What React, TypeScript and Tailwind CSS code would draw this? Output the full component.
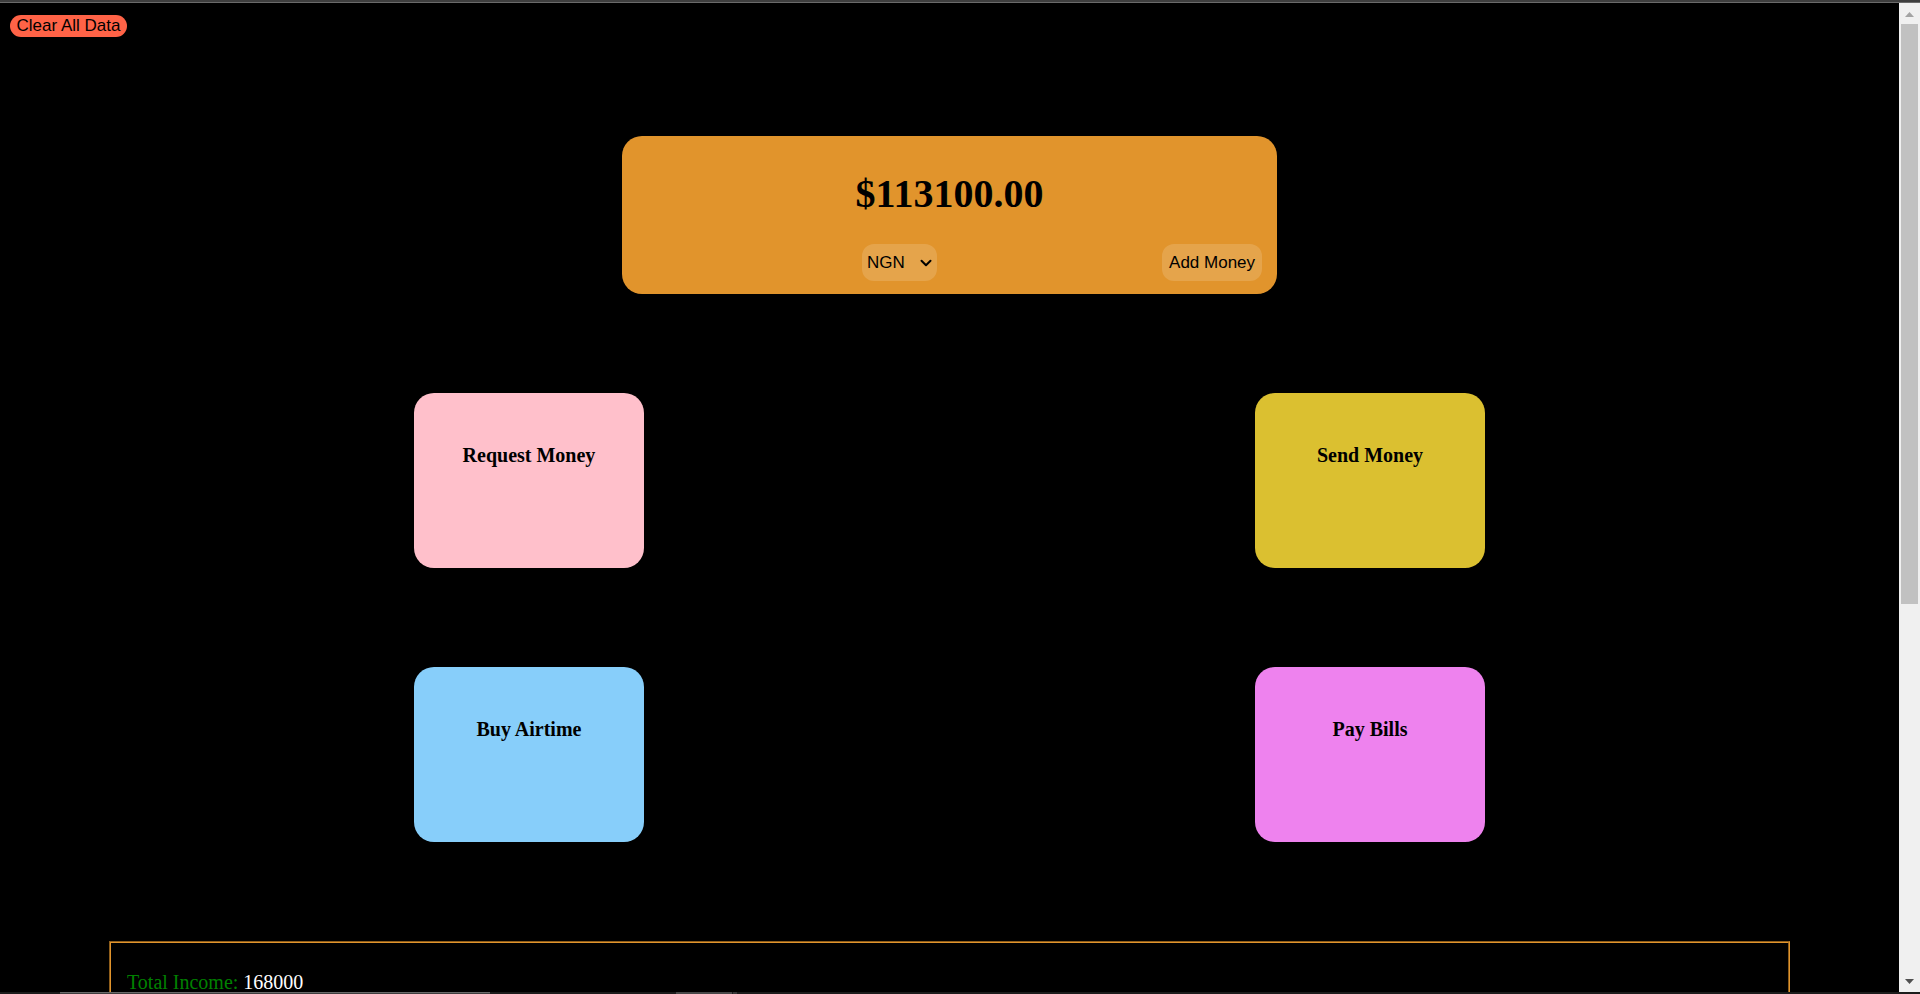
import { ChevronDown } from "lucide-react";

const actions = [
  { label: "Request Money", color: "bg-[#ffc0cb]" },
  { label: "Send Money", color: "bg-[#dbc030]" },
  { label: "Buy Airtime", color: "bg-[#87cefa]" },
  { label: "Pay Bills", color: "bg-[#ee82ee]" },
];

function Balance() {
  return (
    <section className="mx-auto mt-[99px] h-[158px] w-[34.5%] rounded-[20px] bg-[#e1942c] pt-[34px]">
      <h1 className="text-center text-[40px] leading-[48px] font-bold">$113100.00</h1>
      <div className="mt-[26px] flex justify-between pr-[15px] pl-60">
        <div className="relative">
          <select
            aria-label="Currency"
            className="block h-[37px] w-[75px] appearance-none rounded-[12px] bg-white/15 pl-[5px] font-['Liberation_Sans',sans-serif] text-[17px]"
          >
            <option>NGN</option>
            <option>USD</option>
          </select>
          <ChevronDown
            className="pointer-events-none absolute top-[10px] right-[2px] size-[18px]"
            strokeWidth={2.7}
          />
        </div>
        <button className="h-[37px] w-[100px] rounded-[12px] bg-white/15 font-['Liberation_Sans',sans-serif] text-[17px]">
          Add Money
        </button>
      </div>
    </section>
  );
}

function Scrollbar() {
  return (
    <div aria-hidden="true" className="flex w-[21px] shrink-0 flex-col items-center bg-[#f0f0f0]">
      <svg className="h-[21px] w-[9px] shrink-0" viewBox="0 0 9 21">
        <path d="M0 14 4.500 9 9 14Z" fill="#a3a3a3" />
      </svg>
      <div className="h-[580px] w-[17px] bg-[#c1c1c1]" />
      <svg className="mt-auto h-[21px] w-[9px] shrink-0" viewBox="0 0 9 21">
        <path d="M0 8 4.500 13 9 8Z" fill="#505050" />
      </svg>
    </div>
  );
}

export default function App() {
  return (
    <div className="flex h-screen flex-col overflow-hidden bg-black font-['Liberation_Serif',serif] text-black">
      <div className="h-[3px] shrink-0 border-b border-[#6a6a6a] bg-[#3e3e3e]" />
      <div className="flex min-h-0 flex-1">
        <main className="min-w-0 flex-1 overflow-hidden">
          <div className="flex px-[10px] pt-3">
            <button className="h-[22px] w-[117px] rounded-full bg-[#ff6347] font-['Liberation_Sans',sans-serif] text-[17px] leading-[20px]">
              Clear All Data
            </button>
          </div>
          <Balance />
          <div className="mt-[99px] ml-[21.8%] grid w-[56.4%] grid-cols-[230px_230px] justify-between gap-y-[99px]">
            {actions.map((action) => (
              <button
                key={action.label}
                className={`flex h-[175px] justify-center rounded-[20px] pt-[50px] text-[20px] leading-6 font-bold ${action.color}`}
              >
                {action.label}
              </button>
            ))}
          </div>
          <section className="mx-[109px] mt-[99px] h-60 border-2 border-[#e1942c] px-4 pt-[27px] text-[20px] leading-6 text-white [border-style:groove]">
            <p>
              <span className="text-[#008000]">Total Income:</span> 168000
            </p>
          </section>
        </main>
        <Scrollbar />
      </div>
      <div aria-hidden="true" className="flex h-[2px] shrink-0 bg-[#1c1c1c]">
        <div className="ml-[60px] w-[430px] border-t border-[#6a6a6a] bg-[#3e3e3e]" />
        <div className="ml-[186px] w-[56px] bg-[#484848]" />
        <div className="ml-px w-1 bg-[#383838]" />
      </div>
    </div>
  );
}
